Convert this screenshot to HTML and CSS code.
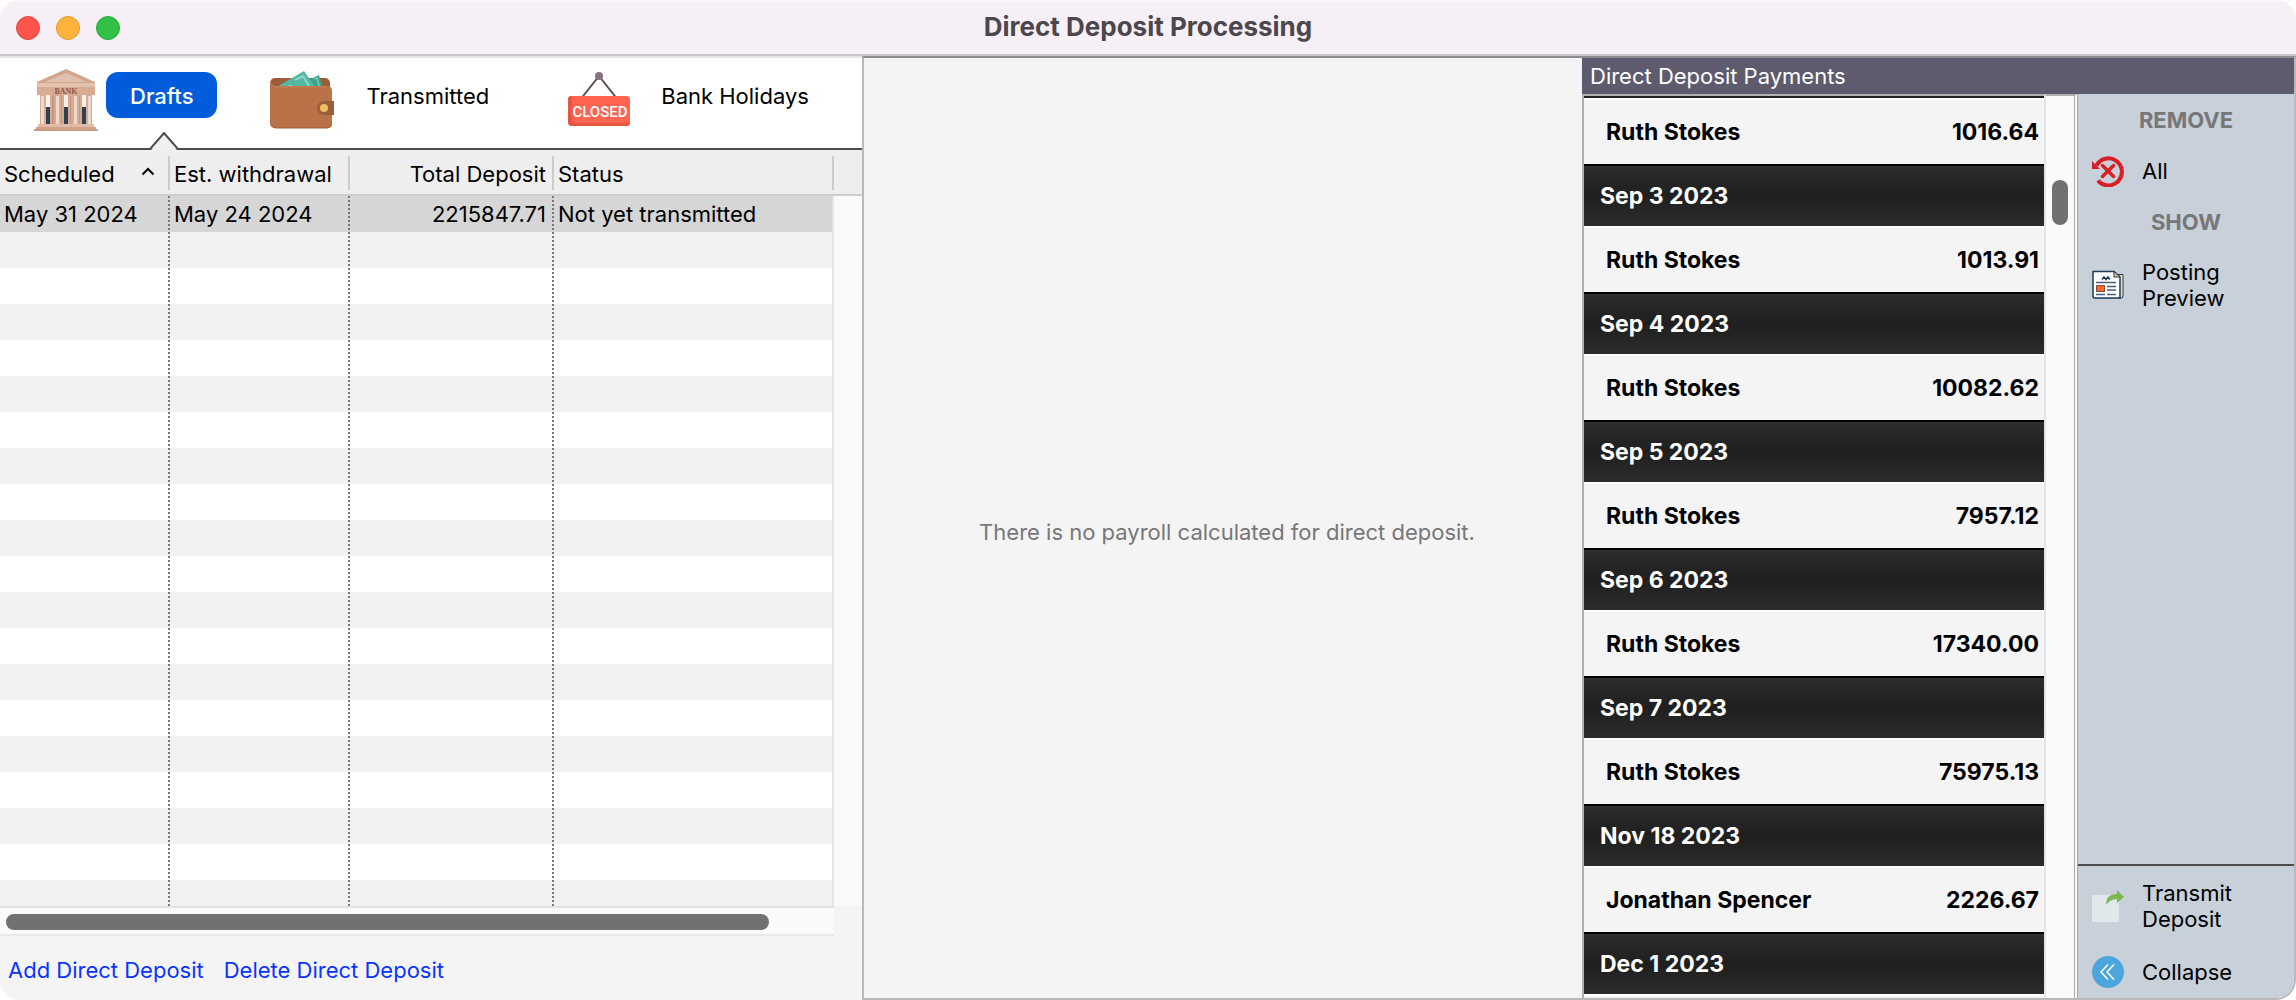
FILE: index.html
```html
<!DOCTYPE html>
<html lang="en">
<head>
<meta charset="utf-8">
<title>Direct Deposit Processing</title>
<link rel="stylesheet" href="styles.css">
</head>
<body>
<div class="window">
  <header class="titlebar">
    <div class="lights">
      <button class="light light-close" aria-label="Close"></button>
      <button class="light light-min" aria-label="Minimize"></button>
      <button class="light light-zoom" aria-label="Zoom"></button>
    </div>
    <h1 class="title">Direct Deposit Processing</h1>
  </header>
  <main class="panes">
    <section class="drafts">
      <nav class="tabs">
        <button class="tab tab-active">
          <svg class="tab-icon" width="64" height="64" viewBox="0 0 64 64" aria-hidden="true">
            <path d="M32 1 61 14V20H3V14z" fill="#d3a58b"/>
            <path d="M32 5 53 14H11z" fill="#dfc0ad"/>
            <path d="M3 15H61V19H3z" fill="#e2c3b0"/>
            <path d="M3 19H61V27H3z" fill="#d9ab92"/>
            <path d="M6 27H58V57H6z" fill="#d6ab94"/>
            <path d="M12 27h4v12h-4zM30 27h4v12h-4zM48 27h4v12h-4z" fill="#f7efe8"/>
            <path d="M12 39h4v17h-4zM30 39h4v17h-4zM48 39h4v17h-4z" fill="#2c4252"/>
            <path d="M7 28h3v28H7zM22 28h3v28h-3zM40 28h3v28h-3zM54 28h3v28h-3z" fill="#ecd9cc"/>
            <path d="M18 28h2v28h-2zM27 28h1v28h-1zM36 28h1v28h-1zM45 28h1v28h-1z" fill="#c6957b"/>
            <path d="M4 56H60V59H4z" fill="#e0bda9"/>
            <path d="M2 59H62V61H2z" fill="#d0a088"/>
            <path d="M0 61H64V63H0z" fill="#c99b84"/>
            <text x="32" y="26" class="bank-text">BANK</text>
          </svg>
          <span class="tab-label">Drafts</span>
          <svg class="notch" width="28" height="18" viewBox="0 0 28 18" aria-hidden="true"><path d="M1 18 14 2 27 18z" fill="#f0f0f0"/><path d="M0 17 14 1 28 17" fill="none" stroke="#4c4c4c" stroke-width="2"/></svg>
        </button>
        <button class="tab tab-transmitted">
          <svg class="tab-icon" width="64" height="64" viewBox="0 0 64 64" aria-hidden="true">
            <rect x="0" y="10" width="60" height="20" rx="5" fill="#9c5d3b"/>
            <path d="M38 12 49 7 53 22H36z" fill="#3aa48d"/>
            <path d="M44 11 47 10 50 21" fill="none" stroke="#7dc9b8" stroke-width="1.500"/>
            <path d="M5 20 34 3 46 20z" fill="#52b9a3"/>
            <path d="M25 12 33 8 39 18" fill="none" stroke="#95d4c7" stroke-width="2"/>
            <path d="M15 20q5-6 11 0z" fill="#95d4c7"/>
            <path d="M0 14q2 4 6 4H57q5 0 5 5V55q0 5-5 5H5q-5 0-5-5z" fill="#bb7147"/>
            <path d="M0 14q2 5 6 5H57" fill="none" stroke="#c98058"/>
            <path d="M1 57q2 3 5 3H57q4 0 5-4" fill="none" stroke="#a15f3b"/>
            <path d="M64 33H54a7 7 0 0 0 0 14H64z" fill="#9c5d3b"/>
            <circle cx="54" cy="40" r="4" fill="#efc15e"/>
          </svg>
          <span class="tab-label">Transmitted</span>
        </button>
        <button class="tab tab-holidays">
          <svg class="tab-icon" width="64" height="64" viewBox="0 0 64 64" aria-hidden="true">
            <path d="M13 32 32 8 51 32" fill="none" stroke="#5d4b58" stroke-width="2"/>
            <circle cx="32" cy="8" r="4" fill="#86717f"/>
            <rect x="1" y="28" width="62" height="30" rx="4" fill="#ff6450"/>
            <path d="M5 28H4Q1 28 1 32V54q0 4 4 4H59q4 0 4-3H10q-5 0-5-5z" fill="#e85643"/>
            <text x="33" y="49" class="closed-text">CLOSED</text>
          </svg>
          <span class="tab-label">Bank Holidays</span>
        </button>
      </nav>
      <div class="grid">
        <div class="grid-body">
          <table class="deposits">
            <colgroup><col class="c-sched"><col class="c-est"><col class="c-total"><col class="c-status"><col></colgroup>
            <thead>
              <tr>
                <th><span class="sortable">Scheduled <svg width="14" height="10" viewBox="0 0 14 10" aria-hidden="true"><path d="M1.500 7.500 7 2 12.500 7.500" fill="none" stroke="#000" stroke-width="2"/></svg></span></th>
                <th>Est. withdrawal</th><th class="num">Total Deposit</th><th>Status</th><th></th>
              </tr>
            </thead>
            <tbody>
              <tr class="selected"><td>May 31 2024</td><td>May 24 2024</td><td class="num">2215847.71</td><td>Not yet transmitted</td><td class="track"></td></tr>
              <tr><td></td><td></td><td></td><td></td><td class="track"></td></tr>
              <tr><td></td><td></td><td></td><td></td><td class="track"></td></tr>
              <tr><td></td><td></td><td></td><td></td><td class="track"></td></tr>
              <tr><td></td><td></td><td></td><td></td><td class="track"></td></tr>
              <tr><td></td><td></td><td></td><td></td><td class="track"></td></tr>
              <tr><td></td><td></td><td></td><td></td><td class="track"></td></tr>
              <tr><td></td><td></td><td></td><td></td><td class="track"></td></tr>
              <tr><td></td><td></td><td></td><td></td><td class="track"></td></tr>
              <tr><td></td><td></td><td></td><td></td><td class="track"></td></tr>
              <tr><td></td><td></td><td></td><td></td><td class="track"></td></tr>
              <tr><td></td><td></td><td></td><td></td><td class="track"></td></tr>
              <tr><td></td><td></td><td></td><td></td><td class="track"></td></tr>
              <tr><td></td><td></td><td></td><td></td><td class="track"></td></tr>
              <tr><td></td><td></td><td></td><td></td><td class="track"></td></tr>
              <tr><td></td><td></td><td></td><td></td><td class="track"></td></tr>
              <tr><td></td><td></td><td></td><td></td><td class="track"></td></tr>
              <tr><td></td><td></td><td></td><td></td><td class="track"></td></tr>
              <tr><td></td><td></td><td></td><td></td><td class="track"></td></tr>
              <tr><td></td><td></td><td></td><td></td><td class="track"></td></tr>
            </tbody>
          </table>
        </div>
        <div class="hscroll"><div class="hthumb"></div></div>
      </div>
      <footer class="links">
        <a href="#add">Add Direct Deposit</a>
        <a href="#delete">Delete Direct Deposit</a>
      </footer>
    </section>
    <section class="empty"><p>There is no payroll calculated for direct deposit.</p></section>
    <section class="payments">
      <h2 class="payments-title">Direct Deposit Payments</h2>
      <div class="payments-body">
        <div class="list">
          <div class="list-top"></div>
          <div class="person"><span>Ruth Stokes</span><span>1016.64</span></div>
          <h3 class="day">Sep 3 2023</h3>
          <div class="person"><span>Ruth Stokes</span><span>1013.91</span></div>
          <h3 class="day">Sep 4 2023</h3>
          <div class="person"><span>Ruth Stokes</span><span>10082.62</span></div>
          <h3 class="day">Sep 5 2023</h3>
          <div class="person"><span>Ruth Stokes</span><span>7957.12</span></div>
          <h3 class="day">Sep 6 2023</h3>
          <div class="person"><span>Ruth Stokes</span><span>17340.00</span></div>
          <h3 class="day">Sep 7 2023</h3>
          <div class="person"><span>Ruth Stokes</span><span>75975.13</span></div>
          <h3 class="day">Nov 18 2023</h3>
          <div class="person"><span>Jonathan Spencer</span><span>2226.67</span></div>
          <h3 class="day">Dec 1 2023</h3>
          <div class="list-end"></div>
        </div>
        <div class="vscroll"><div class="vthumb"></div></div>
        <aside class="actions">
          <h4>REMOVE</h4>
          <button class="action">
            <svg width="32" height="32" viewBox="0 0 32 32" aria-hidden="true"><path d="M4.500 10.500A13.500 13.500 0 1 1 6 25.500" fill="none" stroke="#d61f26" stroke-width="4"/><path d="M0 6 0 14 8 14z" fill="#d61f26"/><path d="M10.500 10.500 21.500 21.500M21.500 10.500 10.500 21.500" stroke="#d61f26" stroke-width="3.500" stroke-linecap="round"/></svg>
            <span>All</span>
          </button>
          <h4>SHOW</h4>
          <button class="action action-tall">
            <svg width="32" height="32" viewBox="0 0 32 32" aria-hidden="true"><path d="M26 5.500H31V27q0 2-2 2H26z" fill="#f8e0b5" stroke="#193a5a"/><path d="M1 2.500H22L28 8V29H3q-2 0-2-2z" fill="#fff" stroke="#193a5a" stroke-width="1.500"/><path d="M22 2.500V8H28z" fill="#f2c66f" stroke="#193a5a"/><path d="M10 10.500 12 8 14 10.500 16 8 18 10.500" fill="none" stroke="#193a5a" stroke-width="1.500"/><path d="M4 13.500H24M15 17.500H24M15 21H24M4 25.500H13M15 25.500H24" stroke="#48617a" stroke-width="1.500"/><path d="M4.500 16.500H12.500V22.500H4.500z" fill="#ff6a2b" stroke="#7b4b3d"/></svg>
            <span>Posting<br>Preview</span>
          </button>
          <div class="actions-bottom">
            <button class="action action-tall">
              <svg width="32" height="32" viewBox="0 0 32 32" aria-hidden="true"><path d="M0 5H27V32H0z" fill="#e1e8eb"/><path d="M14 15Q14 4 25 4V0L32 7 25 13V9Q18 9 14 15z" fill="#7db750"/></svg>
              <span>Transmit<br>Deposit</span>
            </button>
            <button class="action">
              <svg width="32" height="32" viewBox="0 0 32 32" aria-hidden="true"><circle cx="16" cy="16" r="16" fill="#4ca6dd"/><path d="M16 8.500 9 16 16 23.500M22 8.500 15 16 22 23.500" fill="none" stroke="#fff" stroke-width="1.500"/></svg>
              <span>Collapse</span>
            </button>
          </div>
        </aside>
      </div>
    </section>
  </main>
</div>
</body>
</html>
```
FILE: styles.css
```css
* { box-sizing: border-box; }
body {
  margin: 0;
  background: #fff;
  color: #000;
  font: 22px/26px Inter, "Liberation Sans", sans-serif;
}
button {
  margin: 0;
  padding: 0;
  border: 0;
  background: none;
  color: inherit;
  font: inherit;
  text-align: left;
}
h1, h2, h3, h4, p { margin: 0; }
svg { display: block; flex: none; }

.window {
  display: flex;
  flex-direction: column;
  height: 100vh;
  border-radius: 20px;
  background: #f4f4f4;
  overflow: hidden;
}
.titlebar {
  display: grid;
  grid-template-columns: 1fr auto 1fr;
  align-items: center;
  flex: none;
  height: 56px;
  padding: 0 16px;
  border-top: 2px solid #faf6fa;
  border-bottom: 2px solid #cbc4cb;
  background: #f6eff6;
}
.lights { display: flex; gap: 16px; }
.light { width: 24px; height: 24px; border-radius: 12px; }
.light-close { background: #ff544e; border: 1px solid #e2443f; }
.light-min { background: #ffb33a; border: 1px solid #df9a2c; }
.light-zoom { background: #32c146; border: 1px solid #28a838; }
.title { padding-bottom: 2px; color: #4b474b; font-size: 26px; line-height: 30px; font-weight: 700; }

.panes { display: flex; flex: 1; min-height: 0; }

.drafts {
  display: flex;
  flex-direction: column;
  flex: 0 0 862px;
  min-width: 0;
  border-top: 2px solid #e6e4e6;
}
.tabs {
  display: flex;
  flex: none;
  height: 92px;
  padding: 10px 0 0 34px;
  border-bottom: 2px solid #4c4c4c;
  background: #fff;
}
.tab { display: flex; position: relative; }
.tab-label { padding: 15px 0; height: 56px; }
.tab-active .tab-label {
  height: 46px;
  margin: 4px 0 0 8px;
  padding: 11px 24px;
  border-radius: 12px;
  background: #005cdb;
  color: #fff;
  font-weight: 500;
}
.notch { position: absolute; left: 116px; bottom: -2px; }
.tab-transmitted { margin-left: 53px; gap: 32px; }
.tab-holidays { margin-left: 78px; gap: 30px; }
.bank-text {
  font: bold 8px "Liberation Serif", serif;
  fill: #8b5a45;
  text-anchor: middle;
}
.closed-text {
  font: 500 15px Roboto, "Liberation Sans", sans-serif;
  fill: #fff;
  text-anchor: middle;
}

.grid { display: flex; flex-direction: column; flex: 1; min-height: 0; }
.grid-body { flex: 1; min-height: 0; overflow: hidden; }
.deposits {
  width: 100%;
  table-layout: fixed;
  border-collapse: separate;
  border-spacing: 0;
}
.c-sched { width: 170px; }
.c-est { width: 180px; }
.c-total { width: 204px; }
.c-status { width: 280px; }
th, td { padding: 0 4px; text-align: left; font-weight: 400; white-space: nowrap; }
th {
  height: 46px;
  padding-top: 3px;
  border-bottom: 2px solid #cdcdcd;
  background: linear-gradient(#cbcbcb, #cbcbcb) right 6px / 2px 34px no-repeat #eee;
}
th:last-child { background: #eee; }
td {
  height: 36px;
  background: repeating-linear-gradient(#777 0 2px, transparent 2px 4px) right / 2px 100% no-repeat;
}
td:nth-child(4) { background: linear-gradient(#e4e4e4, #e4e4e4) right / 2px 100% no-repeat; }
.num { padding-right: 8px; text-align: right; }
tbody tr { background: #fff; }
tbody tr:nth-child(even) { background: #f1f3f2; }
tbody tr.selected { background: #d6d6d6; }
td.track { background: #fafafa; }
.sortable { display: flex; align-items: center; justify-content: space-between; padding-right: 11px; }
.sortable svg { margin-bottom: 4px; }
.hscroll {
  flex: none;
  width: 834px;
  height: 30px;
  padding: 6px;
  border-top: 2px solid #e3e3e3;
  border-bottom: 2px solid #e8e8e8;
  background: #fafafa;
}
.hthumb { width: 763px; height: 16px; border-radius: 8px; background: #717171; }
.links { display: flex; flex: none; gap: 20px; height: 64px; padding: 21px 8px; }
.links a { color: #0c34ff; text-decoration: none; }

.empty {
  display: flex;
  align-items: center;
  justify-content: center;
  flex: 1;
  min-width: 0;
  padding: 8px 0 0 8px;
  border: solid #b9b9b9;
  border-width: 2px 0 2px 2px;
  border-top-color: #8f8d91;
  color: #777;
}

.payments {
  display: flex;
  flex-direction: column;
  flex: 0 0 714px;
  min-width: 0;
  border: solid #b9b9b9;
  border-width: 2px 2px 2px 0;
  border-top-color: #8f8d91;
  border-bottom-right-radius: 20px;
  overflow: hidden;
}
.payments-title {
  flex: none;
  height: 36px;
  padding: 5px 8px;
  background: #5d5b6d;
  color: #fff;
  font-size: 22px;
  line-height: 26px;
  font-weight: 400;
}
.payments-body { display: flex; flex: 1; min-height: 0; }
.list {
  flex: 1;
  min-width: 0;
  border-left: 2px solid #b0b0b0;
  border-top: 2px solid #b0b0b0;
  overflow: hidden;
  font-size: 23px;
  font-weight: 700;
}
.list-top { height: 2px; background: #222; }
.person {
  display: flex;
  justify-content: space-between;
  height: 66px;
  padding: 19px 5px 19px 22px;
  border-top: 2px solid #fff;
}
.day {
  height: 62px;
  padding: 17px 16px;
  border-top: 2px solid #000;
  background: linear-gradient(#2c2c2c, #1f1f1f 50%, #2c2c2c);
  color: #fff;
  font-size: 23px;
  line-height: 26px;
}
.list-end { height: 2px; background: #fff; }
.vscroll {
  flex: none;
  width: 34px;
  padding: 84px 0 0 6px;
  border: solid #e4e4e4;
  border-width: 0 2px;
  border-top: 2px solid #b0b0b0;
  border-right: 4px double #a8a8a8;
  background: #fafafa;
}
.vthumb { width: 16px; height: 45px; border-radius: 8px; background: #717171; }
.actions {
  display: flex;
  flex-direction: column;
  flex: 0 0 216px;
  padding-top: 13px;
  background: #c8d0da;
}
.actions h4 { color: #777; font-size: 22px; line-height: 26px; text-align: center; }
.action {
  display: flex;
  align-items: center;
  gap: 18px;
  width: 100%;
  height: 32px;
  padding-left: 14px;
}
.actions > .action { margin: 22px 0; }
.action-tall { height: 52px; }
.actions > .action-tall { margin: 24px 0; }
.actions-bottom {
  display: flex;
  flex-direction: column;
  gap: 24px;
  margin-top: auto;
  padding: 14px 0 10px;
  border-top: 2px solid #4c4c4c;
}
```
